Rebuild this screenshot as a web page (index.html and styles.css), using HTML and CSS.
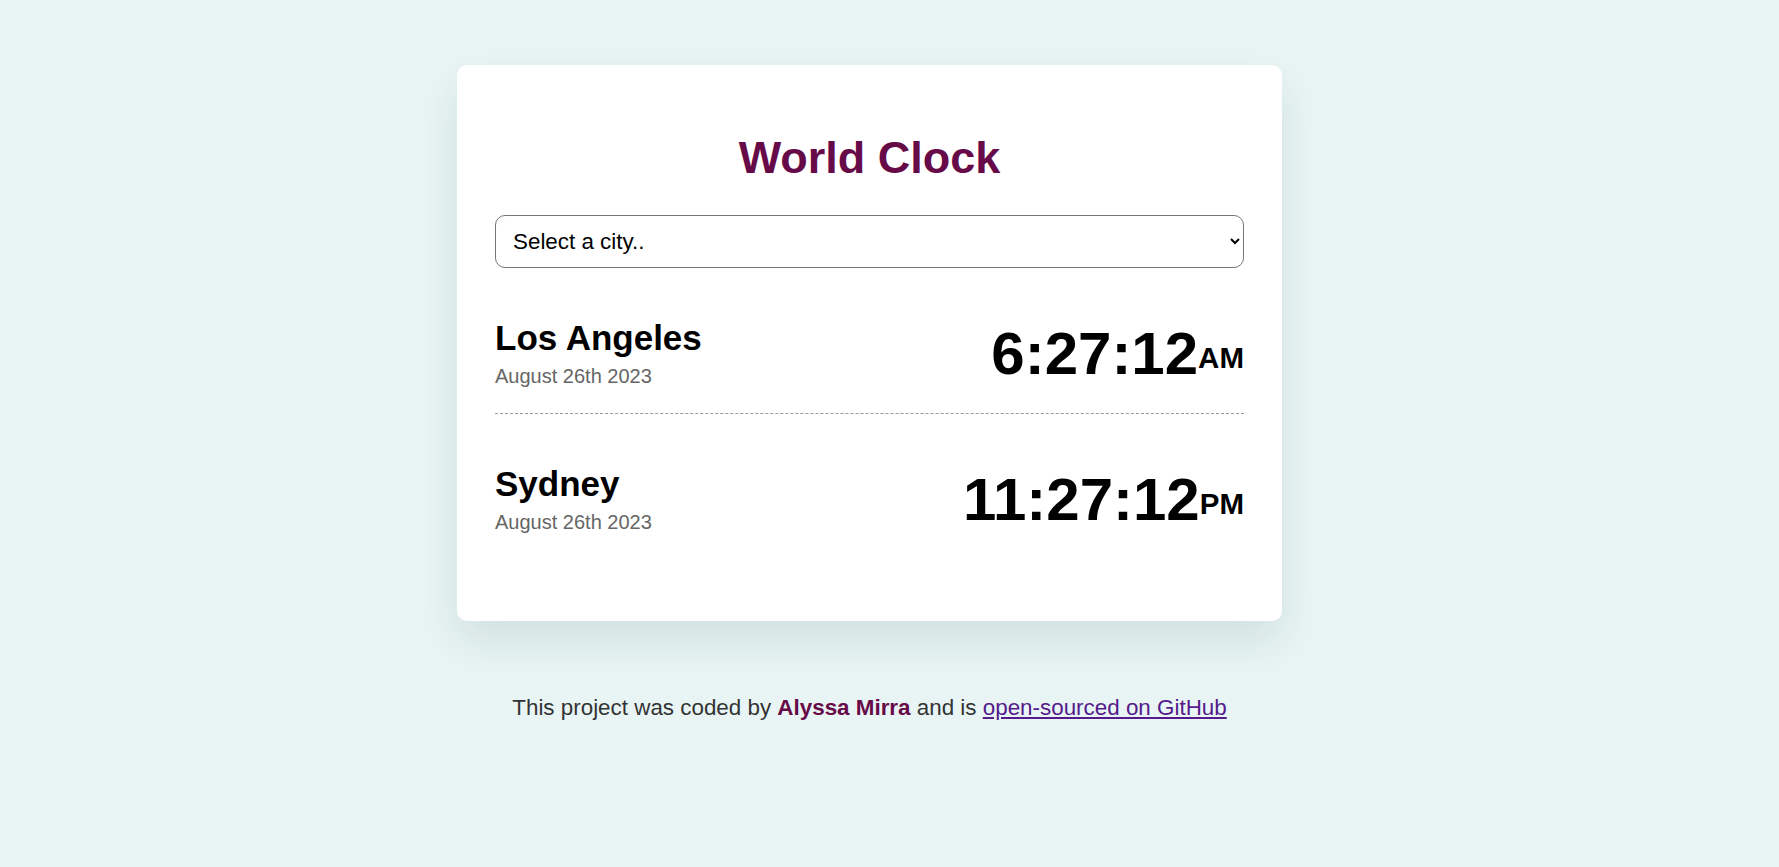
FILE: index.html
```html
<!DOCTYPE html>
<html lang="en">
<head>
<meta charset="utf-8">
<title>World Clock</title>
<link rel="stylesheet" href="styles.css">
</head>
<body>
<div class="container">
  <div class="card">
    <h1 class="title">World Clock</h1>
    <select class="city-select">
      <option>Select a city..</option>
      <option>Tokyo</option>
      <option>Paris</option>
    </select>
    <div class="cities">
      <div class="city">
        <div class="city-info">
          <h2 class="city-name">Los Angeles</h2>
          <div class="date">August 26th 2023</div>
        </div>
        <div class="time">6:27:12<small class="ampm">AM</small></div>
      </div>
      <div class="city">
        <div class="city-info">
          <h2 class="city-name">Sydney</h2>
          <div class="date">August 26th 2023</div>
        </div>
        <div class="time">11:27:12<small class="ampm">PM</small></div>
      </div>
    </div>
  </div>
  <footer class="footer">This project was coded by <strong class="author">Alyssa Mirra</strong> and is <a class="repo-link" href="#">open-sourced on GitHub</a></footer>
</div>
</body>
</html>
```
FILE: styles.css
```css
body {
  margin: 0;
  padding: 65px 40px 0 0;
  background: #e9f5f5;
  font-family: "Liberation Sans", Arial, sans-serif;
}

.container {
  width: 825px;
  margin: 0 auto;
}

.card {
  background: #ffffff;
  border-radius: 10px;
  padding: 38px 38px 37px;
  box-shadow: 0 20px 45px rgba(0, 40, 40, 0.1);
}

.title {
  margin: 29px 0 31px;
  font-size: 45px;
  font-weight: bold;
  text-align: center;
  color: #670a48;
  line-height: normal;
}

.city-select {
  display: block;
  box-sizing: border-box;
  width: 100%;
  height: 53px;
  padding: 0 13px;
  font-family: "Liberation Sans", Arial, sans-serif;
  font-size: 22.4px;
  color: #000;
  background: #ffffff;
  border: 1px solid #767676;
  border-radius: 10px;
}

.city {
  display: flex;
  justify-content: space-between;
  align-items: center;
  margin: 25px 0;
  padding: 25px 0;
  border-bottom: 1px dashed #9a9a9a;
}

.city:last-child {
  border-bottom: none;
}

.city-name {
  margin: 0 0 7px;
  font-size: 35px;
  font-weight: bold;
  color: #000;
}

.date {
  font-size: 20px;
  color: #666666;
}

.time {
  font-size: 60px;
  font-weight: bold;
  color: #000;
}

.ampm {
  font-size: 29.5px;
  vertical-align: middle;
}

.footer {
  margin-top: 74px;
  text-align: center;
  font-size: 22.4px;
  color: #333333;
}

.author {
  color: #670a48;
}

.repo-link {
  color: #551a8b;
}
```
